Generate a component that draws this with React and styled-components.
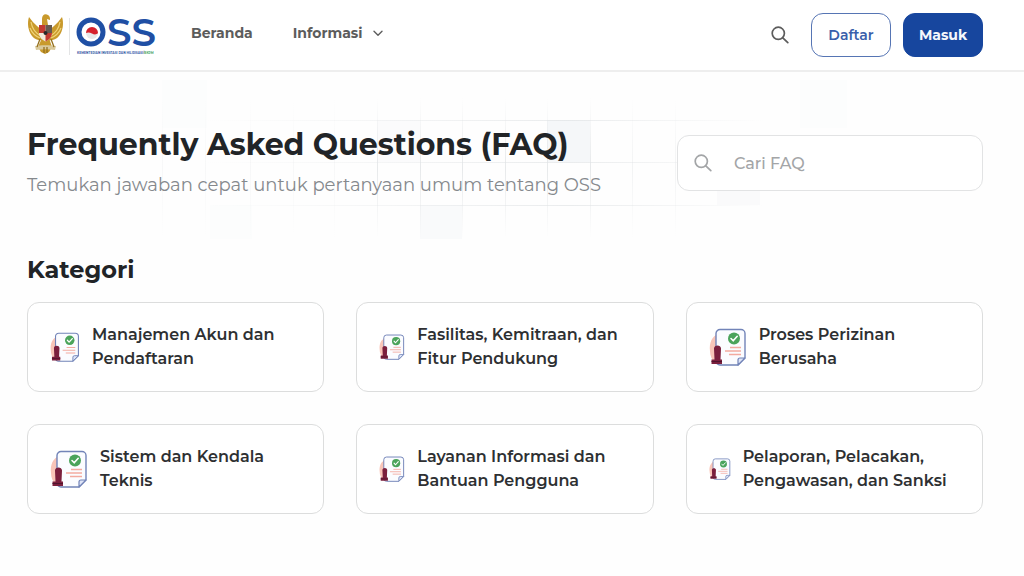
import React from "react";
import styled, { createGlobalStyle } from "styled-components";

const GlobalStyle = createGlobalStyle`
  *, *::before, *::after { box-sizing: border-box; }
  body {
    margin: 0;
    background: #fefefe;
    color: #212427;
    font-family: Montserrat, Inter, "Open Sans", sans-serif;
  }
  h1, h2, p, ul { margin: 0; padding: 0; }
`;

const Header = styled.header`
  display: flex;
  align-items: center;
  height: 72px;
  padding: 0 41px 0 27px;
  background: #fff;
  border-bottom: 2px solid #eeeeee;
`;

const LogoLink = styled.a`
  display: flex;
  margin-right: 32px;
`;

const Nav = styled.nav`
  display: flex;
  align-items: center;
  gap: 40px;
  flex: 1;
  padding-bottom: 4px;
`;

const navItem = `
  display: flex;
  align-items: center;
  gap: 10px;
  padding: 0;
  border: 0;
  background: none;
  color: #5c5c5c;
  font: inherit;
  font-size: 14px;
  font-weight: 700;
  line-height: 20px;
  text-decoration: none;
  cursor: pointer;
`;

const NavLink = styled.a`${navItem}`;
const NavMenuButton = styled.button`${navItem}`;

const Actions = styled.div`
  display: flex;
  align-items: center;
  gap: 12px;
`;

const IconButton = styled.button`
  display: flex;
  margin-right: 10px;
  padding: 0;
  border: 0;
  background: none;
  color: #5c5c5c;
  cursor: pointer;
`;

const Button = styled.button`
  width: 80px;
  height: 44px;
  padding: 0;
  border: 1px solid ${(p) => (p.$primary ? "#17469e" : "#5675b4")};
  border-radius: 12px;
  background: ${(p) => (p.$primary ? "#17469e" : "#fff")};
  color: ${(p) => (p.$primary ? "#f4f7fc" : "#3a5fab")};
  font: inherit;
  font-size: 14px;
  font-weight: ${(p) => (p.$primary ? 700 : 600)};
  cursor: pointer;
`;

const Hero = styled.section`
  position: relative;
  display: flex;
  align-items: center;
  justify-content: space-between;
  gap: 32px;
  height: 168px;
  padding: 14px 41px 0 27px;
`;

const HeroPattern = styled.svg`
  position: absolute;
  top: 0;
  left: 50%;
  transform: translateX(-50%);
  z-index: -1;
`;

const Title = styled.h1`
  font-size: 30px;
  font-weight: 700;
  line-height: 40px;
  white-space: nowrap;
`;

const Subtitle = styled.p`
  margin-top: 4px;
  color: #85898d;
  font-size: 18px;
  font-weight: 400;
  line-height: 32px;
  white-space: nowrap;
`;

const SearchBox = styled.label`
  display: flex;
  align-items: center;
  gap: 22px;
  flex: 0 1 306px;
  min-width: 0;
  height: 56px;
  padding: 0 16px;
  border: 1px solid #e2e3e4;
  border-radius: 12px;
  background: #fff;
  color: #a3a5a7;
`;

const SearchInput = styled.input`
  flex: 1;
  min-width: 0;
  padding: 0;
  border: 0;
  outline: 0;
  background: none;
  color: #212427;
  font: inherit;
  font-size: 16px;
  font-weight: 500;
  &::placeholder { color: #a3a5a7; opacity: 1; }
`;

const Categories = styled.main`
  padding: 14px 41px 40px 27px;
`;

const SectionTitle = styled.h2`
  margin-bottom: 16px;
  font-size: 24px;
  font-weight: 700;
  line-height: 32px;
`;

const CardGrid = styled.ul`
  display: grid;
  grid-template-columns: repeat(3, minmax(0, 1fr));
  gap: 32px;
  list-style: none;
`;

const Card = styled.a`
  display: flex;
  align-items: center;
  gap: 12px;
  height: 90px;
  padding: 0 22px;
  border: 1px solid #dcdddd;
  border-radius: 12px;
  background: #fff;
  color: #2e3032;
  text-decoration: none;
`;

const CardLabel = styled.span`
  font-size: 16px;
  font-weight: 600;
  line-height: 24px;
  white-space: pre-line;
`;

const StampSvg = styled.svg`
  flex-shrink: 0;
`;

const Glass = ({ size }) => (
  <svg width={size} height={size} viewBox="0 0 18 18" fill="none" stroke="currentColor" strokeWidth="1.7" strokeLinecap="round" aria-hidden="true">
    <circle cx="7.3" cy="7.3" r="6.1" />
    <path d="M11.8 11.8 16.8 16.6" />
  </svg>
);

const Chevron = () => (
  <svg width="12" height="12" viewBox="0 0 12 12" fill="none" stroke="currentColor" strokeWidth="1.4" strokeLinecap="round" strokeLinejoin="round" aria-hidden="true">
    <path d="M2 4.2 6 8.2 10 4.2" />
  </svg>
);

const Logo = () => (
  <svg width="132" height="44" viewBox="0 0 132 44" role="img" aria-label="OSS">
    <g fill="#c99a2c">
      <path d="M2 4C0 10 1 18 5 23c3 4 8 5 11 4l2-8C13 16 7 11 2 4Z" />
      <path d="M35 4c2 6 1 14-3 19-3 4-8 5-11 4l-2-8c5-3 11-8 16-15Z" />
      <path d="M15 6c0-4 3-6 6-4 2 1 2 3 2 5l-3-1 1 6h-6Z" />
      <path d="M15 25h7l3 9-3 5-4 2-4-2-3-5Z" />
      <path d="M8 33c4-1 17-1 21 0l-1 4c-6-1-13-1-19 0Z" fill="#d9c99b" />
    </g>
    <path d="M4 9c1 6 4 11 10 14M3 15c2 5 5 8 10 10M33 9c-1 6-4 11-10 14M34 15c-2 5-5 8-10 10" fill="none" stroke="#f0d479" strokeWidth="1.2" />
    <path d="M13 26l-3 8M24 26l3 8M17 34v6M20 34v6" stroke="#94701f" strokeWidth="1.3" />
    <path d="M12 12h13v8c0 4-3 7-6.500 8.500C15 27 12 24 12 20Z" fill="#f3eadb" />
    <path d="M12 12h6.500v8H12ZM18.500 20H25c0 4-3 7-6.500 8.500Z" fill="#c33a31" />
    <path d="M18.500 12H25v8h-6.500Z" fill="#665a50" />
    <circle cx="18.500" cy="20" r="2" fill="#28282a" />
    <path d="M42.500 5v37" stroke="#e3e4e5" />
    <circle cx="64" cy="19" r="12" fill="#fff" stroke="#1f4fa4" strokeWidth="5" />
    <circle cx="65" cy="20" r="6" fill="#e6e7e9" />
    <path d="M59 20a6 6 0 0 1 12 0c-2 2-4 1.500-6 .5s-4-1.500-6-.5Z" fill="#d5202c" />
    <text x="80" y="33" fill="#1f4fa4" fontFamily="Montserrat, Inter, sans-serif" fontSize="39" fontWeight="600">SS</text>
    <text x="50" y="41" fill="#3c61a8" fontFamily="Montserrat, Inter, sans-serif" fontSize="3" fontWeight="700">KEMENTERIAN INVESTASI DAN HILIRISASI/<tspan fill="#4fa66a">BKPM</tspan></text>
  </svg>
);

const StampIcon = ({ size }) => (
  <StampSvg width={size} height={size} viewBox="0 0 38 38" aria-hidden="true">
    <path d="M9 6C3 8 0 15 1 23c0 5 2 9 5 12h7V6Z" fill="#f9c5b8" />
    <path d="M11 1.500h21a4 4 0 0 1 4 4V30l-7 7H11a4 4 0 0 1-4-4V5.500a4 4 0 0 1 4-4Z" fill="#fbfcff" stroke="#7284b8" strokeWidth="1.400" />
    <path d="M29 37v-5a2 2 0 0 1 2-2h5Z" fill="#dfe5f7" stroke="#7284b8" strokeWidth="1.200" strokeLinejoin="round" />
    <circle cx="25" cy="10.500" r="6" fill="#4ba45b" />
    <path d="m22 10.500 2.200 2.300 4-4.500" fill="none" stroke="#fff" strokeWidth="1.600" strokeLinecap="round" strokeLinejoin="round" />
    <path d="M21 19.500h11M16 23h16M20 26.500h12" stroke="#f3aaa0" strokeWidth="1.300" />
    <path d="M5 20.500c0-4 7-4 7 0l-.5 11H13V36H2.500v-4.500h3Z" fill="#7b1f3d" />
    <path d="M2.500 33.500H13" stroke="#4f142d" />
  </StampSvg>
);

const columns = [162, 205, 250, 293, 334, 377, 420, 462, 505, 547, 590, 632, 675];
const tiles = [
  [162, 8, 45, 48, 0.15], [377, 48, 43, 42, 0.3], [420, 133, 42, 34, 0.5],
  [547, 48, 43, 42, 0.9], [717, 115, 43, 18, 0.4], [210, 133, 42, 34, 0.15], [800, 8, 47, 48, 0.15],
];

const Pattern = () => (
  <HeroPattern width="1024" height="168" viewBox="0 0 1024 168" aria-hidden="true">
    <defs>
      <linearGradient id="rows" x1="0" x2="1" y1="0" y2="0">
        <stop offset="0" stopColor="#dfe2e4" stopOpacity="0" />
        <stop offset="0.65" stopColor="#dfe2e4" stopOpacity="0.65" />
        <stop offset="1" stopColor="#dfe2e4" stopOpacity="0" />
      </linearGradient>
      <linearGradient id="columns" x1="0" x2="0" y1="0" y2="1">
        <stop offset="0" stopColor="#dfe2e4" stopOpacity="0" />
        <stop offset="0.5" stopColor="#dfe2e4" stopOpacity="0.75" />
        <stop offset="1" stopColor="#dfe2e4" stopOpacity="0" />
      </linearGradient>
    </defs>
    {tiles.map(([x, y, w, h, o]) => (
      <rect key={x} x={x} y={y} width={w} height={h} fill="#f4f6f8" opacity={o} />
    ))}
    {[48, 90, 133].map((y) => (
      <rect key={y} x="205" y={y} width="560" height="1" fill="url(#rows)" />
    ))}
    {columns.map((x) => (
      <rect key={x} x={x} y="26" width="1" height="140" fill="url(#columns)" opacity={x < 377 ? 0.3 : x > 600 ? 0.5 : 1} />
    ))}
  </HeroPattern>
);

const categories = [
  { label: "Manajemen Akun dan\nPendaftaran", icon: 30 },
  { label: "Fasilitas, Kemitraan, dan\nFitur Pendukung", icon: 26 },
  { label: "Proses Perizinan\nBerusaha", icon: 38 },
  { label: "Sistem dan Kendala\nTeknis", icon: 38 },
  { label: "Layanan Informasi dan\nBantuan Pengguna", icon: 26 },
  { label: "Pelaporan, Pelacakan,\nPengawasan, dan Sanksi", icon: 22 },
];

export default function App() {
  return (
    <>
      <GlobalStyle />
      <Header>
        <LogoLink href="#"><Logo /></LogoLink>
        <Nav>
          <NavLink href="#">Beranda</NavLink>
          <NavMenuButton type="button">Informasi <Chevron /></NavMenuButton>
        </Nav>
        <Actions>
          <IconButton type="button" aria-label="Cari"><Glass size={18} /></IconButton>
          <Button type="button">Daftar</Button>
          <Button type="button" $primary>Masuk</Button>
        </Actions>
      </Header>
      <Hero>
        <Pattern />
        <div>
          <Title>Frequently Asked Questions (FAQ)</Title>
          <Subtitle>Temukan jawaban cepat untuk pertanyaan umum tentang OSS</Subtitle>
        </div>
        <SearchBox>
          <Glass size={18} />
          <SearchInput type="text" placeholder="Cari FAQ" aria-label="Cari FAQ" />
        </SearchBox>
      </Hero>
      <Categories>
        <SectionTitle>Kategori</SectionTitle>
        <CardGrid>
          {categories.map(({ label, icon }) => (
            <li key={label}>
              <Card href="#">
                <StampIcon size={icon} />
                <CardLabel>{label}</CardLabel>
              </Card>
            </li>
          ))}
        </CardGrid>
      </Categories>
    </>
  );
}
